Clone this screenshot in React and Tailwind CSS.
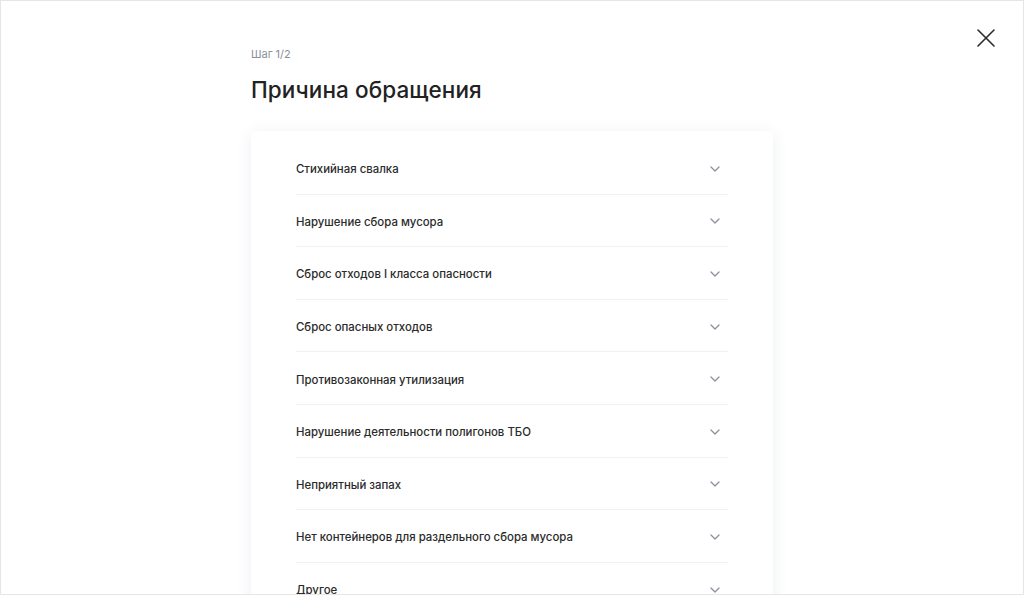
import React from "react";

const REASONS = [
  "Стихийная свалка",
  "Нарушение сбора мусора",
  "Сброс отходов I класса опасности",
  "Сброс опасных отходов",
  "Противозаконная утилизация",
  "Нарушение деятельности полигонов ТБО",
  "Неприятный запах",
  "Нет контейнеров для раздельного сбора мусора",
  "Другое",
];

const Chevron = () => (
  <svg width="10" height="6" viewBox="0 0 10 6" fill="none">
    <path d="M1 1l4 4 4-4" stroke="#8b909b" strokeWidth="1.3" strokeLinecap="round" strokeLinejoin="round" />
  </svg>
);

export default function App() {
  return (
    <div
      className="relative h-[595px] w-[1024px] overflow-hidden border border-[#e6e6e6] bg-white text-[#222]"
      style={{ fontFamily: "Inter, 'Noto Sans', sans-serif" }}
    >
      {/* close button */}
      <button className="absolute right-[28px] top-[28px] p-0">
        <svg width="18" height="18" viewBox="0 0 18 18" fill="none">
          <path d="M1 1l16 16M17 1L1 17" stroke="#2a2a2a" strokeWidth="1.6" strokeLinecap="round" />
        </svg>
      </button>

      <div className="ml-[250px] w-[522px] pt-[46px]">
        <div className="text-[11px] leading-[14px] text-[#8a8f9a]">Шаг 1/2</div>
        <h1 className="mt-[15px] text-[22.5px] font-medium leading-[28px] tracking-[0.1px] text-[#222]">
          Причина обращения
        </h1>

        <div className="mt-[27px] rounded-[4px] bg-white px-[45px] pt-[11px] shadow-[0_2px_16px_rgba(30,50,90,0.08)]">
          {REASONS.map((r, i) => (
            <div
              key={r}
              className={`flex h-[52.6px] items-center justify-between pr-[8px] pt-[2px] ${
                i < REASONS.length - 1 ? "border-b border-[#f0f1f3]" : ""
              }`}
            >
              <span className="pt-[2px] text-[11.4px] font-medium text-[#2b2b2b]">{r}</span>
              <Chevron />
            </div>
          ))}
        </div>
      </div>
    </div>
  );
}
